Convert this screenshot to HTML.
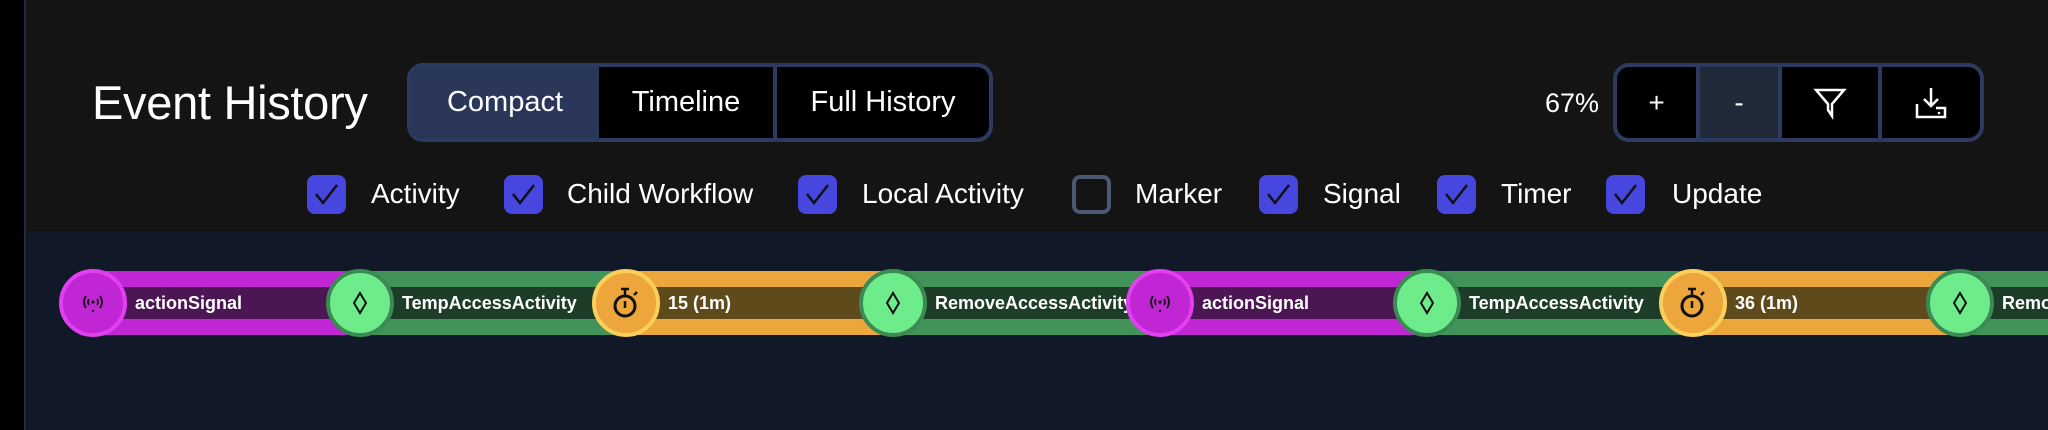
<!DOCTYPE html>
<html><head><meta charset="utf-8"><style>
*{margin:0;padding:0;box-sizing:border-box}
html,body{width:2048px;height:430px;overflow:hidden}
body{background:#141414;font-family:"Liberation Sans",sans-serif;color:#fff;position:relative}
.abs{position:absolute}
#left{left:0;top:0;width:26px;height:430px;background:#000;border-right:2px solid #1e2a4a}
#bottom{left:28px;top:231px;width:2020px;height:199px;background:#111827;overflow:hidden}
.title{left:92px;top:76px;font-size:47px;line-height:54px;letter-spacing:-0.3px}
.seg{left:407px;top:63px;width:586px;height:79px;border:4px solid #2c3a5f;border-radius:16px;background:#000;overflow:hidden;display:flex}
.seg div{height:100%;display:flex;align-items:center;justify-content:center;font-size:29px}
.btns{left:1613px;top:63px;width:371px;height:79px;border:4px solid #2c3a5f;border-radius:16px;background:#000;overflow:hidden;display:flex}
.btns div{height:100%;display:flex;align-items:center;justify-content:center;font-size:28px}
.cb{top:175px;width:39px;height:39px;border-radius:8px;background:#4747e0}
.cb svg{position:absolute;left:6px;top:7px}
.cb.off{background:transparent;border:4px solid #4b5872}
.lbl{top:177px;font-size:28px;line-height:34px}
.band{top:40px;height:64px}
.inner{top:56px;height:32px}
.circ{top:38px;width:68px;height:68px;border-radius:50%;border:4px solid}
.circ svg{position:absolute;left:50%;top:50%;transform:translate(-50%,-50%)}
.t{top:59px;font-size:18px;font-weight:bold;line-height:26px;white-space:nowrap}
</style></head><body>
<div class="abs" id="left"></div>
<div class="abs title">Event History</div>
<div class="abs seg">
 <div style="width:188px;background:#2a3759">Compact</div>
 <div style="width:178px;border-right:4px solid #2c3a5f">Timeline</div>
 <div style="flex:1">Full History</div>
</div>
<div class="abs" style="left:1545px;top:86px;font-size:27px;line-height:34px">67%</div>
<div class="abs btns">
 <div style="width:83px;border-right:4px solid #2c3a5f">+</div>
 <div style="width:82px;background:#1f2937;border-right:4px solid #2c3a5f">-</div>
 <div style="width:100px;border-right:4px solid #2c3a5f"><svg width="34" height="34" viewBox="0 0 34 34"><path d="M3 4H31L19 18V30L15 24V18Z" fill="none" stroke="#fff" stroke-width="2.5"/></svg></div>
 <div style="flex:1"><svg width="34" height="34" viewBox="0 0 34 34"><path d="M17 2V20M10 13L17 20L24 13" fill="none" stroke="#fff" stroke-width="2.5"/><path d="M3 18V31H31V22H22" fill="none" stroke="#fff" stroke-width="2.5"/><circle cx="25" cy="27" r="1.3" fill="#fff"/></svg></div>
</div>

<div class="abs cb" style="left:307px"><svg width="27" height="25" viewBox="0 0 27 25"><path d="M3 12L10 21L24 3" fill="none" stroke="#111" stroke-width="2.5"/></svg></div>
<div class="abs lbl" style="left:371px">Activity</div>
<div class="abs cb" style="left:504px"><svg width="27" height="25" viewBox="0 0 27 25"><path d="M3 12L10 21L24 3" fill="none" stroke="#111" stroke-width="2.5"/></svg></div>
<div class="abs lbl" style="left:567px">Child Workflow</div>
<div class="abs cb" style="left:798px"><svg width="27" height="25" viewBox="0 0 27 25"><path d="M3 12L10 21L24 3" fill="none" stroke="#111" stroke-width="2.5"/></svg></div>
<div class="abs lbl" style="left:862px">Local Activity</div>
<div class="abs cb off" style="left:1072px"></div>
<div class="abs lbl" style="left:1135px">Marker</div>
<div class="abs cb" style="left:1259px"><svg width="27" height="25" viewBox="0 0 27 25"><path d="M3 12L10 21L24 3" fill="none" stroke="#111" stroke-width="2.5"/></svg></div>
<div class="abs lbl" style="left:1323px">Signal</div>
<div class="abs cb" style="left:1437px"><svg width="27" height="25" viewBox="0 0 27 25"><path d="M3 12L10 21L24 3" fill="none" stroke="#111" stroke-width="2.5"/></svg></div>
<div class="abs lbl" style="left:1501px">Timer</div>
<div class="abs cb" style="left:1606px"><svg width="27" height="25" viewBox="0 0 27 25"><path d="M3 12L10 21L24 3" fill="none" stroke="#111" stroke-width="2.5"/></svg></div>
<div class="abs lbl" style="left:1672px">Update</div>

<div class="abs" id="bottom"><div class="abs" style="left:-28px;top:0;width:2048px;height:199px">
<div class="abs band" style="left:93px;width:267px;background:#c026d3"></div>
<div class="abs inner" style="left:93px;width:267px;background:#4c1553"></div>
<div class="abs band" style="left:360px;width:266px;background:#42935a"></div>
<div class="abs inner" style="left:360px;width:266px;background:#1e3d28"></div>
<div class="abs band" style="left:626px;width:267px;background:#eba63c"></div>
<div class="abs inner" style="left:626px;width:267px;background:#5f4a1b"></div>
<div class="abs band" style="left:893px;width:267px;background:#42935a"></div>
<div class="abs inner" style="left:893px;width:267px;background:#1e3d28"></div>
<div class="abs band" style="left:1160px;width:267px;background:#c026d3"></div>
<div class="abs inner" style="left:1160px;width:267px;background:#4c1553"></div>
<div class="abs band" style="left:1427px;width:266px;background:#42935a"></div>
<div class="abs inner" style="left:1427px;width:266px;background:#1e3d28"></div>
<div class="abs band" style="left:1693px;width:267px;background:#eba63c"></div>
<div class="abs inner" style="left:1693px;width:267px;background:#5f4a1b"></div>
<div class="abs band" style="left:1960px;width:88px;background:#42935a"></div>
<div class="abs inner" style="left:1960px;width:88px;background:#1e3d28"></div>

<div class="abs t" style="left:135px">actionSignal</div>
<div class="abs t" style="left:402px">TempAccessActivity</div>
<div class="abs t" style="left:668px">15 (1m)</div>
<div class="abs t" style="left:935px">RemoveAccessActivity</div>
<div class="abs t" style="left:1202px">actionSignal</div>
<div class="abs t" style="left:1469px">TempAccessActivity</div>
<div class="abs t" style="left:1735px">36 (1m)</div>
<div class="abs t" style="left:2002px">Remo</div>

<div class="abs circ" style="left:59px;background:#c026d3;border-color:#e23ff0"><svg width="26" height="22" viewBox="0 0 26 22"><path d="M6 4Q2 10 6 16M20 4Q24 10 20 16M9 7Q7 10 9 13M17 7Q19 10 17 13" fill="none" stroke="#111" stroke-width="1.8"/><circle cx="13" cy="10" r="1.6" fill="#111"/><circle cx="13" cy="19" r="1.2" fill="#111"/></svg></div>
<div class="abs circ" style="left:326px;background:#6eeb8a;border-color:#3a8a52"><svg width="16" height="24" viewBox="0 0 16 24"><path d="M8 2L14 12L8 22L2 12Z" fill="none" stroke="#111" stroke-width="2"/></svg></div>
<div class="abs circ" style="left:592px;background:#eda63c;border-color:#fbd05a"><svg width="30" height="34" viewBox="0 0 30 34"><path d="M10 3H18M14 3V9" stroke="#111" stroke-width="2.5"/><circle cx="14" cy="20" r="10" fill="none" stroke="#111" stroke-width="3"/><path d="M14 15V22M23 9L26 6" stroke="#111" stroke-width="2.5"/></svg></div>
<div class="abs circ" style="left:859px;background:#6eeb8a;border-color:#3a8a52"><svg width="16" height="24" viewBox="0 0 16 24"><path d="M8 2L14 12L8 22L2 12Z" fill="none" stroke="#111" stroke-width="2"/></svg></div>
<div class="abs circ" style="left:1126px;background:#c026d3;border-color:#e23ff0"><svg width="26" height="22" viewBox="0 0 26 22"><path d="M6 4Q2 10 6 16M20 4Q24 10 20 16M9 7Q7 10 9 13M17 7Q19 10 17 13" fill="none" stroke="#111" stroke-width="1.8"/><circle cx="13" cy="10" r="1.6" fill="#111"/><circle cx="13" cy="19" r="1.2" fill="#111"/></svg></div>
<div class="abs circ" style="left:1393px;background:#6eeb8a;border-color:#3a8a52"><svg width="16" height="24" viewBox="0 0 16 24"><path d="M8 2L14 12L8 22L2 12Z" fill="none" stroke="#111" stroke-width="2"/></svg></div>
<div class="abs circ" style="left:1659px;background:#eda63c;border-color:#fbd05a"><svg width="30" height="34" viewBox="0 0 30 34"><path d="M10 3H18M14 3V9" stroke="#111" stroke-width="2.5"/><circle cx="14" cy="20" r="10" fill="none" stroke="#111" stroke-width="3"/><path d="M14 15V22M23 9L26 6" stroke="#111" stroke-width="2.5"/></svg></div>
<div class="abs circ" style="left:1926px;background:#6eeb8a;border-color:#3a8a52"><svg width="16" height="24" viewBox="0 0 16 24"><path d="M8 2L14 12L8 22L2 12Z" fill="none" stroke="#111" stroke-width="2"/></svg></div>
</div></div>
</body></html>
